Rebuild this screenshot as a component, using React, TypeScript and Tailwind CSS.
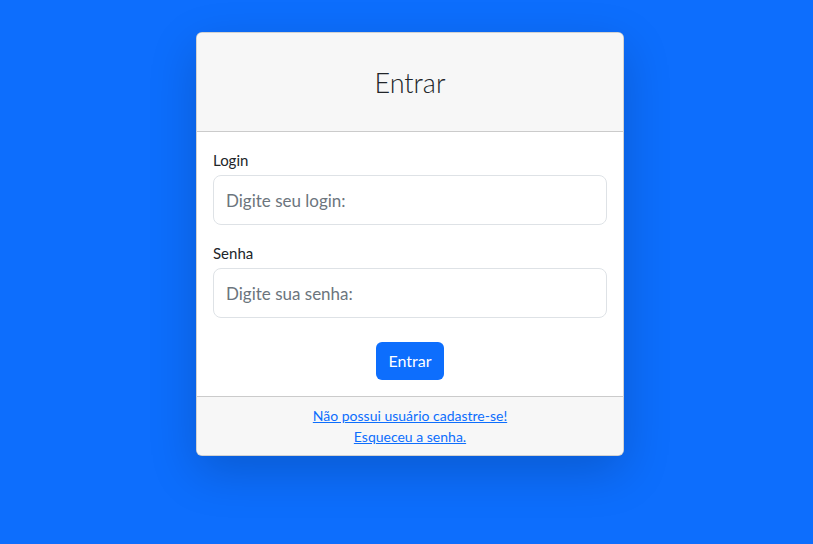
import React from "react";

export default function App() {
  return (
    <div className="min-h-screen w-full bg-[#0d6efd] pt-8 font-['Segoe_UI','Lato','Noto_Sans',sans-serif] text-[#212529]">
      <div className="ml-[196px] w-[428px] rounded-[6px] border border-[rgba(0,0,0,0.175)] bg-white shadow-[0_1rem_3rem_rgba(0,0,0,0.175)] overflow-hidden">
        <div className="flex h-[99px] items-center justify-center border-b border-[rgba(0,0,0,0.175)] bg-[#f7f7f7] pt-[2px]">
          <h2 className="text-[27px] font-light leading-[36px] text-[#212529]">Entrar</h2>
        </div>
        <div className="px-4 pt-[18px] pb-4">
          <label className="mb-[5px] block text-[15px] leading-[20px]">Login</label>
          <input
            className="block h-[50px] w-full rounded-[8px] border border-[#dee2e6] px-[12px] text-[17px] outline-none placeholder:text-[#6c757d]"
            placeholder="Digite seu login:"
          />
          <label className="mt-[18px] mb-[5px] block text-[15px] leading-[20px]">Senha</label>
          <input
            type="password"
            className="block h-[50px] w-full rounded-[8px] border border-[#dee2e6] px-[12px] text-[17px] outline-none placeholder:text-[#6c757d]"
            placeholder="Digite sua senha:"
          />
          <div className="mt-6 flex justify-center">
            <button className="h-[38px] rounded-[6px] bg-[#0d6efd] px-[12px] text-[16px] leading-[24px] text-white">
              Entrar
            </button>
          </div>
        </div>
        <div className="flex flex-col items-center border-t border-[rgba(0,0,0,0.175)] bg-[#f7f7f7] py-2 text-[14px] leading-[21px]">
          <a href="#" className="text-[#0d6efd] underline">Não possui usuário cadastre-se!</a>
          <a href="#" className="text-[#0d6efd] underline">Esqueceu a senha.</a>
        </div>
      </div>
    </div>
  );
}
